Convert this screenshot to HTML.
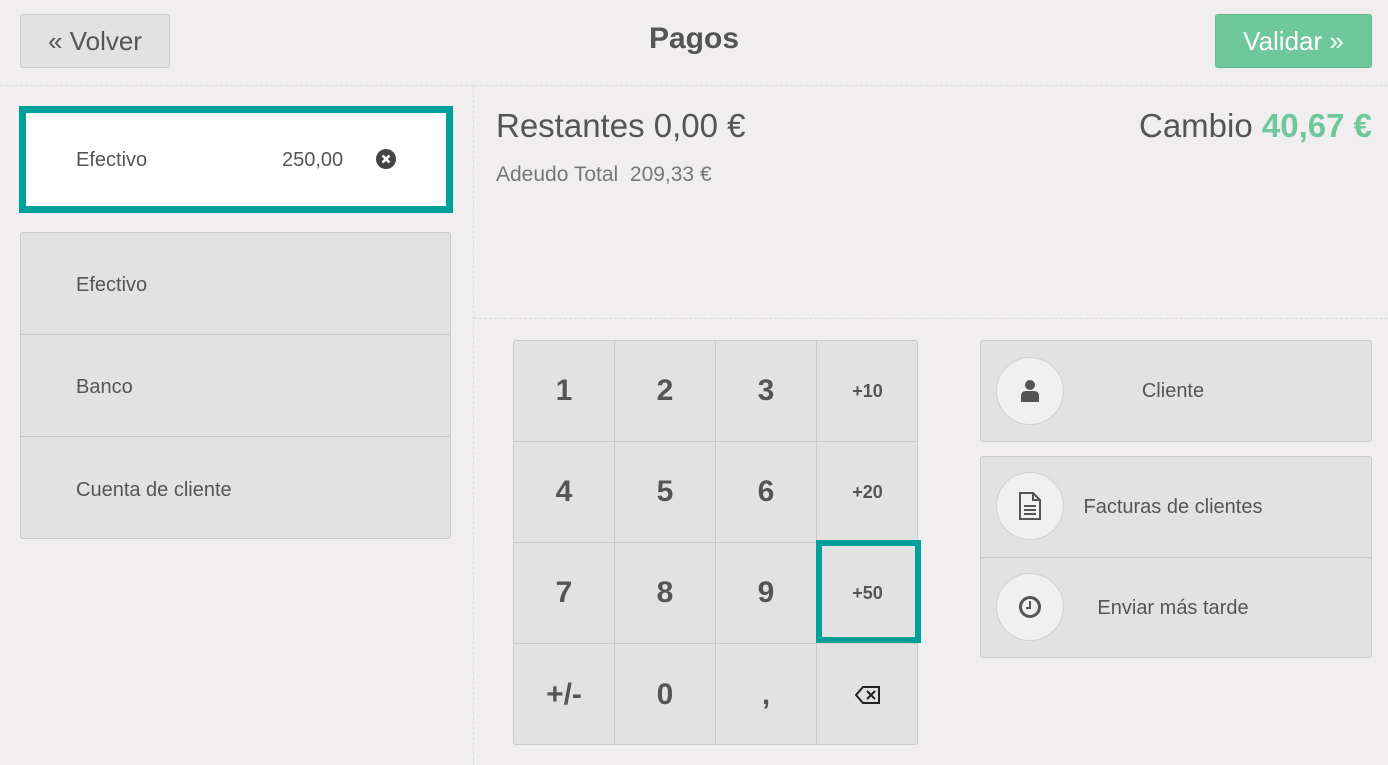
<!DOCTYPE html>
<html><head><meta charset="utf-8"><style>
*{box-sizing:border-box;margin:0;padding:0}
body{width:1388px;height:765px;background:#f0eeee;font-family:"Liberation Sans",sans-serif;color:#555;position:relative;overflow:hidden}
.a{position:absolute}
.btn{position:absolute;border:1px solid #cacaca;border-radius:3px;background:#e2e2e2}
.c{display:flex;align-items:center;justify-content:center}
.cell{position:absolute;width:101px;height:101px;border-right:1px solid #cacaca;border-bottom:1px solid #cacaca;display:flex;align-items:center;justify-content:center;font-size:30px;font-weight:bold;color:#555}
.cell.s{font-size:18px}
.row{position:absolute;left:0;width:100%;height:102px;border-bottom:1px solid #cacaca;font-size:20px;padding-left:55px;padding-top:4px;display:flex;align-items:center}
.circ{position:absolute;left:15px;width:68px;height:68px;border-radius:50%;background:#f0f0f0;border:1px solid #d0d0d0;display:flex;align-items:center;justify-content:center}
</style></head><body>
<div class="btn c" style="left:20px;top:14px;width:150px;height:54px;font-size:26px;color:#555">« Volver</div>
<div class="a" style="left:0;width:1388px;top:22px;text-align:center;font-size:30px;font-weight:bold;color:#555">Pagos</div>
<div class="a c" style="left:1215px;top:14px;width:157px;height:54px;background:#6ec89b;border:1px solid #5fb98c;border-radius:3px;color:#fff;font-size:26px">Validar »</div>
<div class="a" style="left:0;top:85px;width:1388px;border-top:1px dashed #ddd"></div>
<div class="a" style="left:473px;top:85px;height:680px;border-left:1px dashed #ddd"></div>
<div class="a" style="left:474px;top:318px;width:914px;border-top:1px dashed #ddd"></div>

<div class="a" style="left:19px;top:106px;width:434px;height:107px;border:7px solid #00a09a;background:#fff;font-size:20px">
<span class="a" style="left:50px;top:36px">Efectivo</span>
<span class="a" style="left:256px;top:36px">250,00</span>
<svg class="a" style="left:350px;top:36px" width="20" height="20" viewBox="0 0 20 20"><circle cx="10" cy="10" r="10" fill="#444"/><path d="M6.5 6.5L13.5 13.5M13.5 6.5L6.5 13.5" stroke="#fff" stroke-width="2.6"/></svg>
</div>

<div class="btn" style="left:20px;top:232px;width:431px;height:307px;overflow:hidden">
<div class="row" style="top:0">Efectivo</div>
<div class="row" style="top:102px">Banco</div>
<div class="row" style="top:204px;border:none">Cuenta de cliente</div>
</div>

<div class="a" style="left:496px;top:107px;font-size:33px;color:#555">Restantes 0,00 €</div>
<div class="a" style="left:496px;top:163px;font-size:21px;color:#777">Adeudo Total&nbsp; 209,33 €</div>
<div class="a" style="right:16px;top:107px;font-size:33px;color:#555">Cambio <b style="color:#6ec89b">40,67 €</b></div>

<div class="btn" style="left:513px;top:340px;width:405px;height:405px;overflow:hidden">
<div class="cell" style="left:0;top:0">1</div><div class="cell" style="left:101px;top:0">2</div><div class="cell" style="left:202px;top:0">3</div><div class="cell s" style="left:303px;top:0;border-right:none">+10</div>
<div class="cell" style="left:0;top:101px">4</div><div class="cell" style="left:101px;top:101px">5</div><div class="cell" style="left:202px;top:101px">6</div><div class="cell s" style="left:303px;top:101px;border-right:none">+20</div>
<div class="cell" style="left:0;top:202px">7</div><div class="cell" style="left:101px;top:202px">8</div><div class="cell" style="left:202px;top:202px">9</div><div class="cell s" style="left:303px;top:202px;border-right:none">+50</div>
<div class="cell" style="left:0;top:303px;border-bottom:none">+/-</div><div class="cell" style="left:101px;top:303px;border-bottom:none">0</div><div class="cell" style="left:202px;top:303px;border-bottom:none">,</div>
<div class="cell" style="left:303px;top:303px;border:none"><svg width="26" height="20" viewBox="0 0 26 20"><path d="M8 2H24V18H8L1 10Z" fill="none" stroke="#222" stroke-width="2"/><path d="M12 6L20 14M20 6L12 14" stroke="#222" stroke-width="2"/></svg></div>
</div>
<div class="a" style="left:816px;top:540px;width:105px;height:103px;border:6px solid #00a09a"></div>

<div class="btn" style="left:980px;top:340px;width:392px;height:102px">
<div class="circ" style="top:16px"><svg width="20" height="24" viewBox="0 0 20 24"><circle cx="10" cy="6" r="5" fill="#555"/><path d="M1 23V17Q1 12 6 12H14Q19 12 19 17V23Z" fill="#555"/></svg></div>
<div class="a" style="left:0;width:392px;top:39px;text-align:center;font-size:20px;padding-right:8px">Cliente</div>
</div>
<div class="btn" style="left:980px;top:456px;width:392px;height:202px">
<div class="circ" style="top:15px"><svg width="22" height="28" viewBox="0 0 22 28"><path d="M1 1H14L21 8V27H1Z" fill="none" stroke="#555" stroke-width="2"/><path d="M14 1V8H21M5 14H17M5 18H17M5 22H17" fill="none" stroke="#555" stroke-width="2"/></svg></div>
<div class="a" style="left:0;width:392px;top:39px;text-align:center;font-size:20px;padding-right:8px">Facturas de clientes</div>
<div class="a" style="left:0;top:100px;width:390px;border-top:1px solid #cacaca"></div>
<div class="circ" style="top:116px"><svg width="24" height="24" viewBox="0 0 24 24"><circle cx="12" cy="12" r="9.5" fill="none" stroke="#555" stroke-width="3"/><path d="M12 6V13H8" fill="none" stroke="#555" stroke-width="2"/></svg></div>
<div class="a" style="left:0;width:392px;top:140px;text-align:center;font-size:20px;padding-right:8px">Enviar más tarde</div>
</div>
</body></html>
